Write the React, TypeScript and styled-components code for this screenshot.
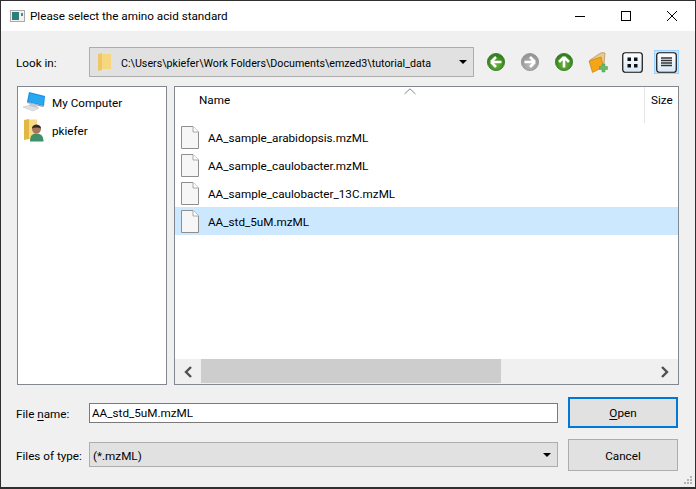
import React from "react"
import styled, { createGlobalStyle } from "styled-components"

const GlobalStyle = createGlobalStyle`
    html, body {
        margin: 0;
        padding: 0;
        background: #2b2b2b;
    }
    * {
        box-sizing: border-box;
    }
`

const Dialog = styled.div`
    width: 696px;
    height: 489px;
    display: flex;
    flex-direction: column;
    border: 1px solid #2f2f2f;
    border-bottom-width: 2px;
    background: #f0f0f0;
    color: #000;
    font-family: Roboto, "Noto Sans", sans-serif;
    font-size: 11.7px;
    overflow: hidden;
    position: relative;
`

const TitleBar = styled.div`
    height: 30px;
    flex: none;
    display: flex;
    align-items: center;
    background: #fff;
    padding-left: 9px;
`

const TitleText = styled.span`
    margin-left: 5px;
    flex: 1;
`

const WindowButton = styled.div`
    width: 46px;
    height: 30px;
    display: flex;
    align-items: center;
    justify-content: center;
`

const Content = styled.div`
    flex: 1;
    display: flex;
    flex-direction: column;
    padding: 16px 16px 0 16px;
`

const LookRow = styled.div`
    height: 30px;
    display: flex;
    align-items: center;
`

const FieldLabel = styled.label`
    width: 72px;
    flex: none;
    margin-left: -1px;
    margin-right: 1px;
    padding-top: 2px;
`

const Mnemonic = styled.span`
    text-decoration: underline;
    text-underline-offset: 2px;
`

const Combo = styled.div<{ $width: number; $height: number }>`
    width: ${(p) => p.$width}px;
    height: ${(p) => p.$height}px;
    flex: none;
    display: flex;
    align-items: center;
    background: #e1e1e1;
    border: 1px solid #adadad;
    padding: 0 6px 0 3px;
`

const TypeCombo = styled(Combo)`
    margin-bottom: 1px;
`

const ComboText = styled.span<{ $tight?: boolean }>`
    flex: 1;
    white-space: nowrap;
    padding-top: 2px;
    font-size: ${(p) => (p.$tight ? "10.7px" : "11.7px")};
`

const ComboFolder = styled.span`
    display: flex;
    margin: 0 8px 0 4px;
`

const Caret = styled.span`
    width: 0;
    height: 0;
    border-left: 4px solid transparent;
    border-right: 4px solid transparent;
    border-top: 4px solid #000;
`

const Tools = styled.div`
    display: flex;
    align-items: center;
    margin-left: 5px;
`

const ToolSlot = styled.div`
    width: 34px;
    height: 26px;
    display: flex;
    align-items: center;
    justify-content: center;
`

const ActiveHalo = styled.span`
    width: 25px;
    height: 24px;
    display: flex;
    align-items: center;
    justify-content: center;
    background: #cce4f7;
    border: 1px solid #99d1ff;
`

const Panes = styled.div`
    height: 299px;
    margin-top: 9px;
    display: flex;
    gap: 7px;
`

const Sidebar = styled.div`
    width: 150px;
    flex: none;
    background: #fff;
    border: 1px solid #828790;
    padding: 1px 0 0 4px;
`

const SideItem = styled.div`
    height: 28px;
    display: flex;
    align-items: center;
    gap: 6px;
`

const SideIcon = styled.span`
    width: 24px;
    display: flex;
    justify-content: center;
`

const RowLabel = styled.span`
    padding-top: 2px;
`

const ListPane = styled.div`
    width: 505px;
    flex: none;
    display: flex;
    flex-direction: column;
    background: #fff;
    border: 1px solid #828790;
`

const HeaderRow = styled.div`
    height: 36px;
    flex: none;
    display: flex;
    position: relative;
`

const HeaderName = styled.div`
    flex: 1;
    padding: 6px 0 0 24px;
    border-right: 1px solid #e5e5e5;
`

const HeaderSize = styled.div`
    width: 33px;
    padding: 6px 0 0 6px;
`

const SortArrow = styled.svg`
    position: absolute;
    left: 229px;
    top: 1px;
`

const Rows = styled.div`
    flex: 1;
`

const FileRow = styled.div<{ $selected?: boolean }>`
    height: 28px;
    display: flex;
    align-items: center;
    gap: 9px;
    padding-left: 6px;
    background: ${(p) => (p.$selected ? "#cce8ff" : "transparent")};
`

const ScrollBar = styled.div`
    height: 25px;
    flex: none;
    display: flex;
    align-items: stretch;
    background: #f0f0f0;
`

const ScrollEnd = styled.div`
    width: 26px;
    flex: none;
    display: flex;
    align-items: center;
    justify-content: center;
`

const ScrollTrack = styled.div`
    flex: 1;
`

const ScrollThumb = styled.div`
    width: 300px;
    height: 24px;
    background: #cdcdcd;
`

const FormRow = styled.div<{ $height: number; $top: number }>`
    height: ${(p) => p.$height}px;
    margin-top: ${(p) => p.$top}px;
    display: flex;
    align-items: center;
`

const NameInput = styled.input`
    width: 469px;
    height: 20px;
    flex: none;
    border: 1px solid #7a7a7a;
    background: #fff;
    padding: 1px 1px 0 2px;
    margin: 0;
    font: inherit;
    color: #000;
    outline: none;
`

const ActionButton = styled.button<{ $primary?: boolean }>`
    width: 110px;
    height: 100%;
    margin-left: 10px;
    flex: none;
    background: #e1e1e1;
    border: ${(p) => (p.$primary ? "2px solid #0078d7" : "1px solid #adadad")};
    font: inherit;
    color: #000;
    padding: ${(p) => (p.$primary ? "0" : "2px 0 0")};
`

const Grip = styled.svg`
    position: absolute;
    right: 2px;
    bottom: 2px;
`

const FolderIcon = () => (
    <svg width="16" height="20" viewBox="0 0 16 20">
        <path d="M4 2 H14 V17 H4 Z" fill="#f6d77f" />
        <path d="M1 2 L5 1 V18 L1 19 Z" fill="#eec664" />
    </svg>
)

const DocIcon = () => (
    <svg width="18" height="23" viewBox="0 0 18 23">
        <path d="M0.5 0.5 H12 L17.5 6 V22.5 H0.5 Z" fill="#f6f6f6" stroke="#8e8e8e" />
        <path d="M12 0.5 V6 H17.5" fill="#fff" stroke="#a8a8a8" />
    </svg>
)

const ComputerIcon = () => (
    <svg width="24" height="20" viewBox="0 0 24 20">
        <path d="M7 0 L23 4 L22 14 L5 10 Z" fill="#1e8fe6" />
        <path d="M8 1.5 L22 5 L21 13 L6.5 9.5 Z" fill="#27a9f2" />
        <path d="M5 10 L22 14 L21 15 L5 11 Z" fill="#8a97a3" />
        <path d="M8 11 L16 13 L15 16 L7 14 Z" fill="#c5cad0" />
        <path d="M1 15 L7 13.5 L17 16 L11 19 Z" fill="#dfe2e5" stroke="#b8bcc1" strokeWidth="0.5" />
    </svg>
)

const UserIcon = () => (
    <svg width="20" height="23" viewBox="0 0 20 23">
        <path d="M0 1 L5 0 L5 20 L0 21 Z" fill="#e2b845" />
        <path d="M5 0.5 H13 V20 H5 Z" fill="#f7da85" />
        <path d="M6 22.5 C6 16.5 8.5 14.5 12.5 14.5 C16.5 14.5 19.5 16.5 19.5 22.5 Z" fill="#3f8f68" />
        <circle cx="12.5" cy="10" r="4.5" fill="#a8765a" />
        <path d="M8 9.5 C8 4.5 17 4.5 17 9.5 C14.5 8 10.5 8 8 9.5 Z" fill="#2f2a28" />
    </svg>
)

const RoundArrow = ({ rotate, light, dark }: { rotate: number; light: string; dark: string }) => {
    const gradientId = `round-${rotate}-${dark.slice(1)}`
    return (
        <svg width="18" height="18" viewBox="0 0 18 18">
            <defs>
                <radialGradient id={gradientId} cx="0.5" cy="0.65" r="0.6">
                    <stop offset="0" stopColor={light} />
                    <stop offset="1" stopColor={dark} />
                </radialGradient>
            </defs>
            <circle cx="9" cy="9" r="8.6" fill={`url(#${gradientId})`} stroke={dark} strokeWidth="0.8" />
            <g transform={`rotate(${rotate} 9 9)`}>
                <path d="M4 9 L9 4 M4 9 L9 14 M4 9 H14.5" stroke="#fff" strokeWidth="2.6" fill="none" />
            </g>
        </svg>
    )
}

const NewFolderIcon = () => (
    <svg width="20" height="21" viewBox="0 0 20 21">
        <path d="M2 8 L11 2 L14 0.5 L17 1 L16 13 L5 19 Z" fill="#e8c98a" stroke="#a88544" strokeWidth="0.6" />
        <path d="M1 9 L13 5 L15.5 15 L4.5 20.5 Z" fill="#f5a516" stroke="#b07a20" strokeWidth="0.6" />
        <path d="M14 12 H17 V14.5 H19.5 V17.5 H17 V20 H14 V17.5 H11.5 V14.5 H14 Z" fill="#6ab86a" stroke="#4b9a4b" strokeWidth="0.5" />
    </svg>
)

const ViewButton = ({ list }: { list?: boolean }) => (
    <svg width="21" height="21" viewBox="0 0 21 21">
        <defs>
            <linearGradient id={list ? "vbl" : "vbg"} x1="0" y1="0" x2="0" y2="1">
                <stop offset="0" stopColor="#ffffff" />
                <stop offset="1" stopColor="#d8e8f6" />
            </linearGradient>
        </defs>
        <rect x="0.75" y="0.75" width="19.5" height="19.5" rx="2.5" fill={`url(#${list ? "vbl" : "vbg"})`} stroke="#111" strokeWidth="1.2" />
        {list ? (
            <path d="M5 6 H16 M5 8.5 H16 M5 11 H16 M5 13.5 H16" stroke="#333" strokeWidth="1.4" />
        ) : (
            <path d="M5.5 5.5 H9 V9 H5.5 Z M12 5.5 H15.5 V9 H12 Z M5.5 12 H9 V15.5 H5.5 Z M12 12 H15.5 V15.5 H12 Z" fill="#111" />
        )}
    </svg>
)

const files = [
    "AA_sample_arabidopsis.mzML",
    "AA_sample_caulobacter.mzML",
    "AA_sample_caulobacter_13C.mzML",
    "AA_std_5uM.mzML",
]

const App: React.FC = () => {
    return (
        <Dialog>
            <GlobalStyle />
            <TitleBar>
                <svg width="15" height="12" viewBox="0 0 15 12">
                    <rect x="0.5" y="0.5" width="14" height="11" fill="#f2f2f2" stroke="#a9a9a9" />
                    <rect x="2" y="2" width="7" height="8" fill="#2f7f78" />
                    <rect x="11" y="3" width="2" height="3" fill="#3f8f8f" />
                </svg>
                <TitleText>Please select the amino acid standard</TitleText>
                <WindowButton>
                    <svg width="10" height="10" viewBox="0 0 10 10">
                        <path d="M0 5.5 H10" stroke="#000" />
                    </svg>
                </WindowButton>
                <WindowButton>
                    <svg width="10" height="10" viewBox="0 0 10 10">
                        <rect x="0.5" y="0.5" width="9" height="9" fill="none" stroke="#000" />
                    </svg>
                </WindowButton>
                <WindowButton>
                    <svg width="10" height="10" viewBox="0 0 10 10">
                        <path d="M0 0 L10 10 M10 0 L0 10" stroke="#000" />
                    </svg>
                </WindowButton>
            </TitleBar>
            <Content>
                <LookRow>
                    <FieldLabel>Look in:</FieldLabel>
                    <Combo $width={385} $height={30}>
                        <ComboFolder>
                            <FolderIcon />
                        </ComboFolder>
                        <ComboText $tight>C:\Users\pkiefer\Work Folders\Documents\emzed3\tutorial_data</ComboText>
                        <Caret />
                    </Combo>
                    <Tools>
                        <ToolSlot>
                            <RoundArrow rotate={0} light="#6db53f" dark="#2f7a1c" />
                        </ToolSlot>
                        <ToolSlot>
                            <RoundArrow rotate={180} light="#bcbcbc" dark="#929292" />
                        </ToolSlot>
                        <ToolSlot>
                            <RoundArrow rotate={90} light="#6db53f" dark="#2f7a1c" />
                        </ToolSlot>
                        <ToolSlot>
                            <NewFolderIcon />
                        </ToolSlot>
                        <ToolSlot>
                            <ViewButton />
                        </ToolSlot>
                        <ToolSlot>
                            <ActiveHalo>
                                <ViewButton list />
                            </ActiveHalo>
                        </ToolSlot>
                    </Tools>
                </LookRow>
                <Panes>
                    <Sidebar>
                        <SideItem>
                            <SideIcon>
                                <ComputerIcon />
                            </SideIcon>
                            <RowLabel>My Computer</RowLabel>
                        </SideItem>
                        <SideItem>
                            <SideIcon>
                                <UserIcon />
                            </SideIcon>
                            <RowLabel>pkiefer</RowLabel>
                        </SideItem>
                    </Sidebar>
                    <ListPane>
                        <HeaderRow>
                            <HeaderName>Name</HeaderName>
                            <HeaderSize>Size</HeaderSize>
                            <SortArrow width="12" height="7" viewBox="0 0 12 7">
                                <path d="M0.5 6 L6 0.8 L11.5 6" fill="none" stroke="#8a8a8a" />
                            </SortArrow>
                        </HeaderRow>
                        <Rows>
                            {files.map((name, i) => (
                                <FileRow key={name} $selected={i === 3}>
                                    <DocIcon />
                                    <RowLabel>{name}</RowLabel>
                                </FileRow>
                            ))}
                        </Rows>
                        <ScrollBar>
                            <ScrollEnd>
                                <svg width="10" height="12" viewBox="0 0 10 12">
                                    <path d="M8 1 L3 6 L8 11" fill="none" stroke="#505050" strokeWidth="2.4" />
                                </svg>
                            </ScrollEnd>
                            <ScrollTrack>
                                <ScrollThumb />
                            </ScrollTrack>
                            <ScrollEnd>
                                <svg width="10" height="12" viewBox="0 0 10 12">
                                    <path d="M2 1 L7 6 L2 11" fill="none" stroke="#505050" strokeWidth="2.4" />
                                </svg>
                            </ScrollEnd>
                        </ScrollBar>
                    </ListPane>
                </Panes>
                <FormRow $height={31} $top={12}>
                    <FieldLabel>
                        File <Mnemonic>n</Mnemonic>ame:
                    </FieldLabel>
                    <NameInput readOnly value="AA_std_5uM.mzML" />
                    <ActionButton $primary>
                        <Mnemonic>O</Mnemonic>pen
                    </ActionButton>
                </FormRow>
                <FormRow $height={32} $top={11}>
                    <FieldLabel>Files of type:</FieldLabel>
                    <TypeCombo $width={469} $height={25}>
                        <ComboText>(*.mzML)</ComboText>
                        <Caret />
                    </TypeCombo>
                    <ActionButton>Cancel</ActionButton>
                </FormRow>
            </Content>
            <Grip width="10" height="10" viewBox="0 0 10 10">
                <path d="M7 1 H9 V3 H7 Z M4 4 H6 V6 H4 Z M7 4 H9 V6 H7 Z M1 7 H3 V9 H1 Z M4 7 H6 V9 H4 Z M7 7 H9 V9 H7 Z" fill="#b5b5b5" />
            </Grip>
        </Dialog>
    )
}

export default App
